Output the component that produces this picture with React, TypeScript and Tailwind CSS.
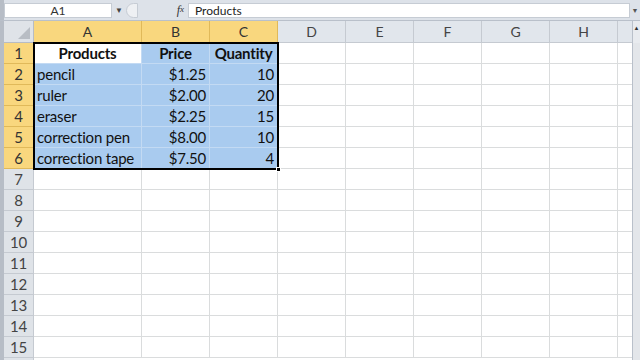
import React from "react";

const cols = [
  { key: "A", w: "w-[108px]", sel: true },
  { key: "B", w: "w-[68px]", sel: true },
  { key: "C", w: "w-[68px]", sel: true },
  { key: "D", w: "w-[68px]", sel: false },
  { key: "E", w: "w-[68px]", sel: false },
  { key: "F", w: "w-[68px]", sel: false },
  { key: "G", w: "w-[68px]", sel: false },
  { key: "H", w: "w-[68px]", sel: false },
];

const data: string[][] = [
  ["Products", "Price", "Quantity"],
  ["pencil", "$1.25", "10"],
  ["ruler", "$2.00", "20"],
  ["eraser", "$2.25", "15"],
  ["correction pen", "$8.00", "10"],
  ["correction tape", "$7.50", "4"],
];

function Cell({ r, c }: { r: number; c: number }) {
  const inSel = r < 6 && c < 3;
  const active = r === 0 && c === 0;
  const text = r < 6 && c < 3 ? data[r][c] : "";
  let align = "justify-start pl-[3px]";
  if (r === 0) align = "justify-center";
  else if (c > 0) align = "justify-end pr-[3px]";
  const bg = active ? "bg-white" : inSel ? "bg-[#a9cbef]" : "bg-white";
  const border = inSel ? "border-[#c3daf3]" : "border-[#dadcdd]";
  return (
    <div
      className={`${cols[c].w} h-full shrink-0 flex items-center border-r border-b ${border} ${bg} ${align} ${r === 0 ? "font-bold" : ""}`}
    >
      {text}
    </div>
  );
}

export default function App() {
  const rows = Array.from({ length: 15 }, (_, i) => i);
  return (
    <div className="w-[640px] h-[360px] overflow-hidden bg-white relative text-[#111] font-['Lato','Open_Sans',sans-serif]">
      {/* Formula bar */}
      <div className="h-[21px] flex bg-[#dde2e9] border-b border-[#b9c0ca]">
        <div className="w-[4px] bg-[#b7bdc6]" />
        <div className="w-[108px] mt-[3px] h-[15px] bg-white border border-[#c6ccd4] flex items-center justify-center text-[12px] text-[#333]">
          A1
        </div>
        <div className="w-[14px] flex items-center justify-center text-[8px] text-[#444]">▼</div>
        <div className="w-[12px] h-[15px] mt-[3px] rounded-l-full bg-[#eef0f3] border border-[#c6ccd4]" />
        <div className="w-[50px] flex items-center justify-end pr-[4px] text-[12px] italic font-['Liberation_Serif',serif] text-[#333]">
          f<span className="text-[9px]">x</span>
        </div>
        <div className="flex-1 mt-[3px] h-[15px] bg-white border border-[#c6ccd4] flex items-center pl-[6px] text-[12px] text-[#222]">
          Products
        </div>
        <div className="w-[10px] flex items-center justify-center text-[7px] text-[#555]">▼</div>
      </div>

      {/* Column headers */}
      <div className="h-[22px] flex text-[14px]">
        <div className="w-[4px] bg-[#b7bdc6]" />
        <div className="w-[30px] bg-[#dfe3e8] border-r border-b border-[#b7bcc4] relative">
          <svg className="absolute right-[3px] bottom-[3px]" width="12" height="12" viewBox="0 0 12 12">
            <path d="M12 0 L12 12 L0 12 Z" fill="#b8bdc4" />
          </svg>
        </div>
        {cols.map((c) => (
          <div
            key={c.key}
            className={`${c.w} shrink-0 flex items-center justify-center border-r border-b ${
              c.sel ? "bg-[#f9d77e] border-[#e0b95a] text-[#333]" : "bg-[#e1e6ec] border-[#c5cad1] text-[#444]"
            }`}
          >
            {c.key}
          </div>
        ))}
        <div className="w-[14px] bg-[#e1e6ec] border-b border-[#c5cad1]" />
        <div className="w-[8px] bg-[#e8ebef] border-l border-[#b9c0ca] flex items-start justify-center pt-[2px]">
          <span className="text-[6px] text-[#333]">▲</span>
        </div>
      </div>

      {/* Rows */}
      {rows.map((r) => (
        <div key={r} className="h-[21px] flex text-[15px] tracking-[-0.2px]">
          <div className="w-[4px] bg-[#b7bdc6]" />
          <div
            className={`w-[30px] shrink-0 flex items-center justify-center border-r border-b text-[15px] ${
              r < 6 ? "bg-[#f9d77e] border-[#e0b95a] text-[#333]" : "bg-[#dfe3e8] border-[#c5cad1] text-[#444]"
            }`}
          >
            {r + 1}
          </div>
          {cols.map((_, c) => (
            <Cell key={c} r={r} c={c} />
          ))}
          <div className="w-[14px] border-b border-[#dadcdd]" />
          <div className="w-[8px] bg-[#e3e6ea] border-l border-[#b9c0ca]" />
        </div>
      ))}
      <div className="h-[4px] flex">
        <div className="w-[4px] bg-[#b7bdc6]" />
        <div className="w-[30px] bg-[#dfe3e8] border-r border-[#c5cad1]" />
        <div className="flex-1" />
        <div className="w-[8px] bg-[#e3e6ea] border-l border-[#b9c0ca]" />
      </div>

      {/* Selection border */}
      <div className="absolute left-[33px] top-[42px] w-[246px] h-[128px] border-2 border-black pointer-events-none" />
      <div className="absolute left-[276px] top-[167px] w-[5px] h-[5px] bg-black border border-white" />
    </div>
  );
}
